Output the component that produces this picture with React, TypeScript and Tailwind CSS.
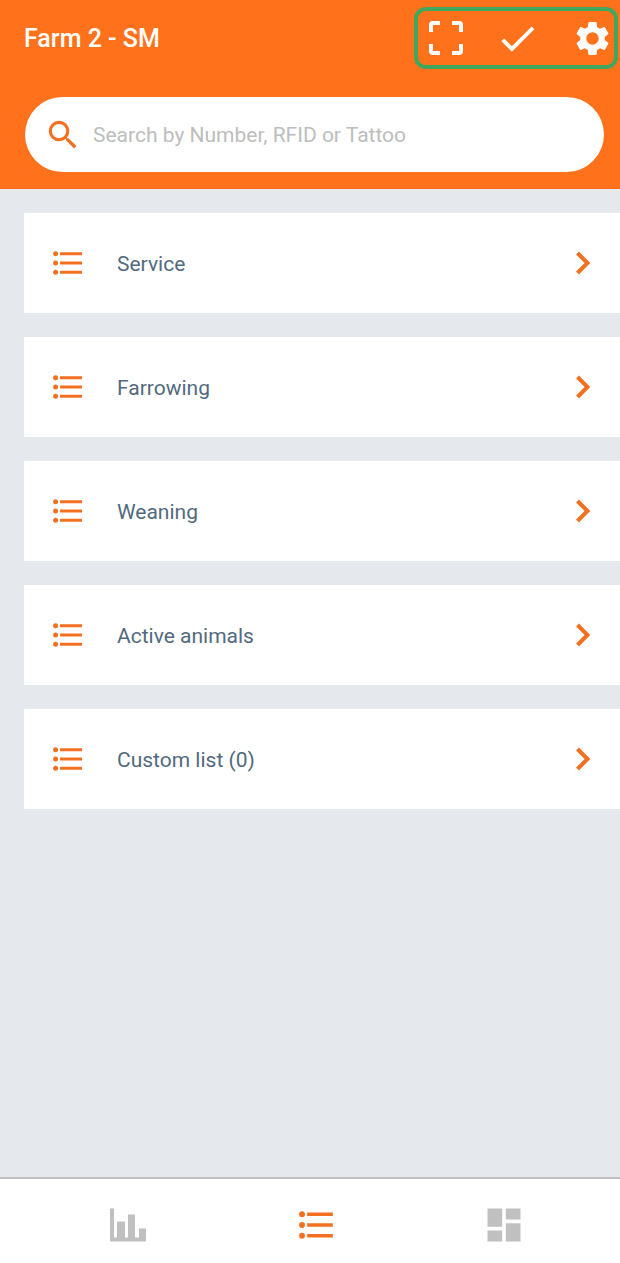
import { useState } from 'react';
import {
  MdCheck,
  MdDashboard,
  MdSearch,
  MdSettings,
} from 'react-icons/md';

const lists = [
  { id: 'service', label: 'Service' },
  { id: 'farrowing', label: 'Farrowing' },
  { id: 'weaning', label: 'Weaning' },
  { id: 'active', label: 'Active animals' },
  { id: 'custom', label: 'Custom list (0)' },
];

const ScanIcon = () => (
  <svg
    className="w-[34px] h-[34px]"
    viewBox="0 0 34 34"
    fill="none"
    stroke="currentColor"
    strokeWidth="4"
  >
    <path d="M2 11V4a2 2 0 0 1 2-2h7M23 2h7a2 2 0 0 1 2 2v7M32 23v7a2 2 0 0 1-2 2h-7M11 32H4a2 2 0 0 1-2-2v-7" />
  </svg>
);

const ListIcon = ({ className }: { className: string }) => (
  <svg className={className} viewBox="0 0 30 24" fill="currentColor">
    <circle cx="2.6" cy="2.8" r="2.5" />
    <circle cx="2.6" cy="12" r="2.5" />
    <circle cx="2.6" cy="21.2" r="2.5" />
    <path d="M7 1.3h22v3H7zM7 10.5h22v3H7zM7 19.7h22v3H7z" />
  </svg>
);

const ChevronIcon = () => (
  <svg
    className="w-4 h-6 shrink-0"
    viewBox="0 0 16 24"
    fill="none"
    stroke="currentColor"
    strokeWidth="4"
  >
    <path d="M2.5 2L12.5 12L2.5 22" />
  </svg>
);

const ChartIcon = () => (
  <svg className="w-9 h-[34px]" viewBox="0 0 36 34" fill="currentColor">
    <path d="M0 .5h4v29h3v-16h8v16h3v-23h7v23h4v-9h7v13H0z" />
  </svg>
);

const App = () => {
  const [query, setQuery] = useState('');

  return (
    <div className="min-h-screen flex flex-col bg-[#e5e8ed] font-[Roboto,sans-serif]">
      <header className="bg-[#ff711b] pt-[7px] pb-[17px]">
        <div className="flex items-center justify-between pl-6 pr-[2px] text-white">
          <h1 className="pt-[2px] text-[25px] font-medium">Farm 2 - SM</h1>
          <div className="flex items-center justify-between w-[204px] h-[62px] pl-[11px] pr-px border-4 border-[#40a85c] rounded-xl">
            <button type="button" aria-label="Scan tag">
              <ScanIcon />
            </button>
            <button type="button" aria-label="Confirm">
              <MdCheck className="size-[45px]" />
            </button>
            <button type="button" aria-label="Settings">
              <MdSettings className="size-[41px]" />
            </button>
          </div>
        </div>
        <label className="flex items-center h-[75px] mt-7 ml-[25px] mr-4 pl-[19px] pr-6 bg-white rounded-full">
          <MdSearch className="size-[38px] shrink-0 text-[#f37021]" />
          <input
            className="flex-1 min-w-0 pt-[2px] pl-[11px] text-[21px] text-[#526a7e] placeholder:text-[#bdbdbd] outline-none"
            type="text"
            aria-label="Search animals"
            value={query}
            onChange={(e) => setQuery(e.target.value)}
            placeholder="Search by Number, RFID or Tattoo"
          />
        </label>
      </header>

      <main className="flex-1 pt-6 pl-6">
        <ul className="flex flex-col gap-6">
          {lists.map((list) => (
            <li key={list.id}>
              <button
                type="button"
                className="w-full h-[100px] flex items-center px-[29px] bg-white text-[#f37021]"
              >
                <ListIcon className="w-[30px] h-6 shrink-0" />
                <span className="flex-1 pt-1 pl-[34px] text-left text-[21px] text-[#526a7e]">
                  {list.label}
                </span>
                <ChevronIcon />
              </button>
            </li>
          ))}
        </ul>
      </main>

      <nav className="grid grid-cols-3 h-[86px] pt-2 pl-[34px] pr-[22px] bg-white border-t-2 border-[#c0c0c0] text-[#c0c0c0]">
        <button
          type="button"
          aria-label="Statistics"
          className="flex items-center justify-center"
        >
          <ChartIcon />
        </button>
        <button
          type="button"
          aria-label="Lists"
          aria-current="page"
          className="flex items-center justify-center text-[#f37021]"
        >
          <ListIcon className="w-[35px] h-7" />
        </button>
        <button
          type="button"
          aria-label="Dashboard"
          className="flex items-center justify-center"
        >
          <MdDashboard className="size-11" />
        </button>
      </nav>
    </div>
  );
};

export default App;
